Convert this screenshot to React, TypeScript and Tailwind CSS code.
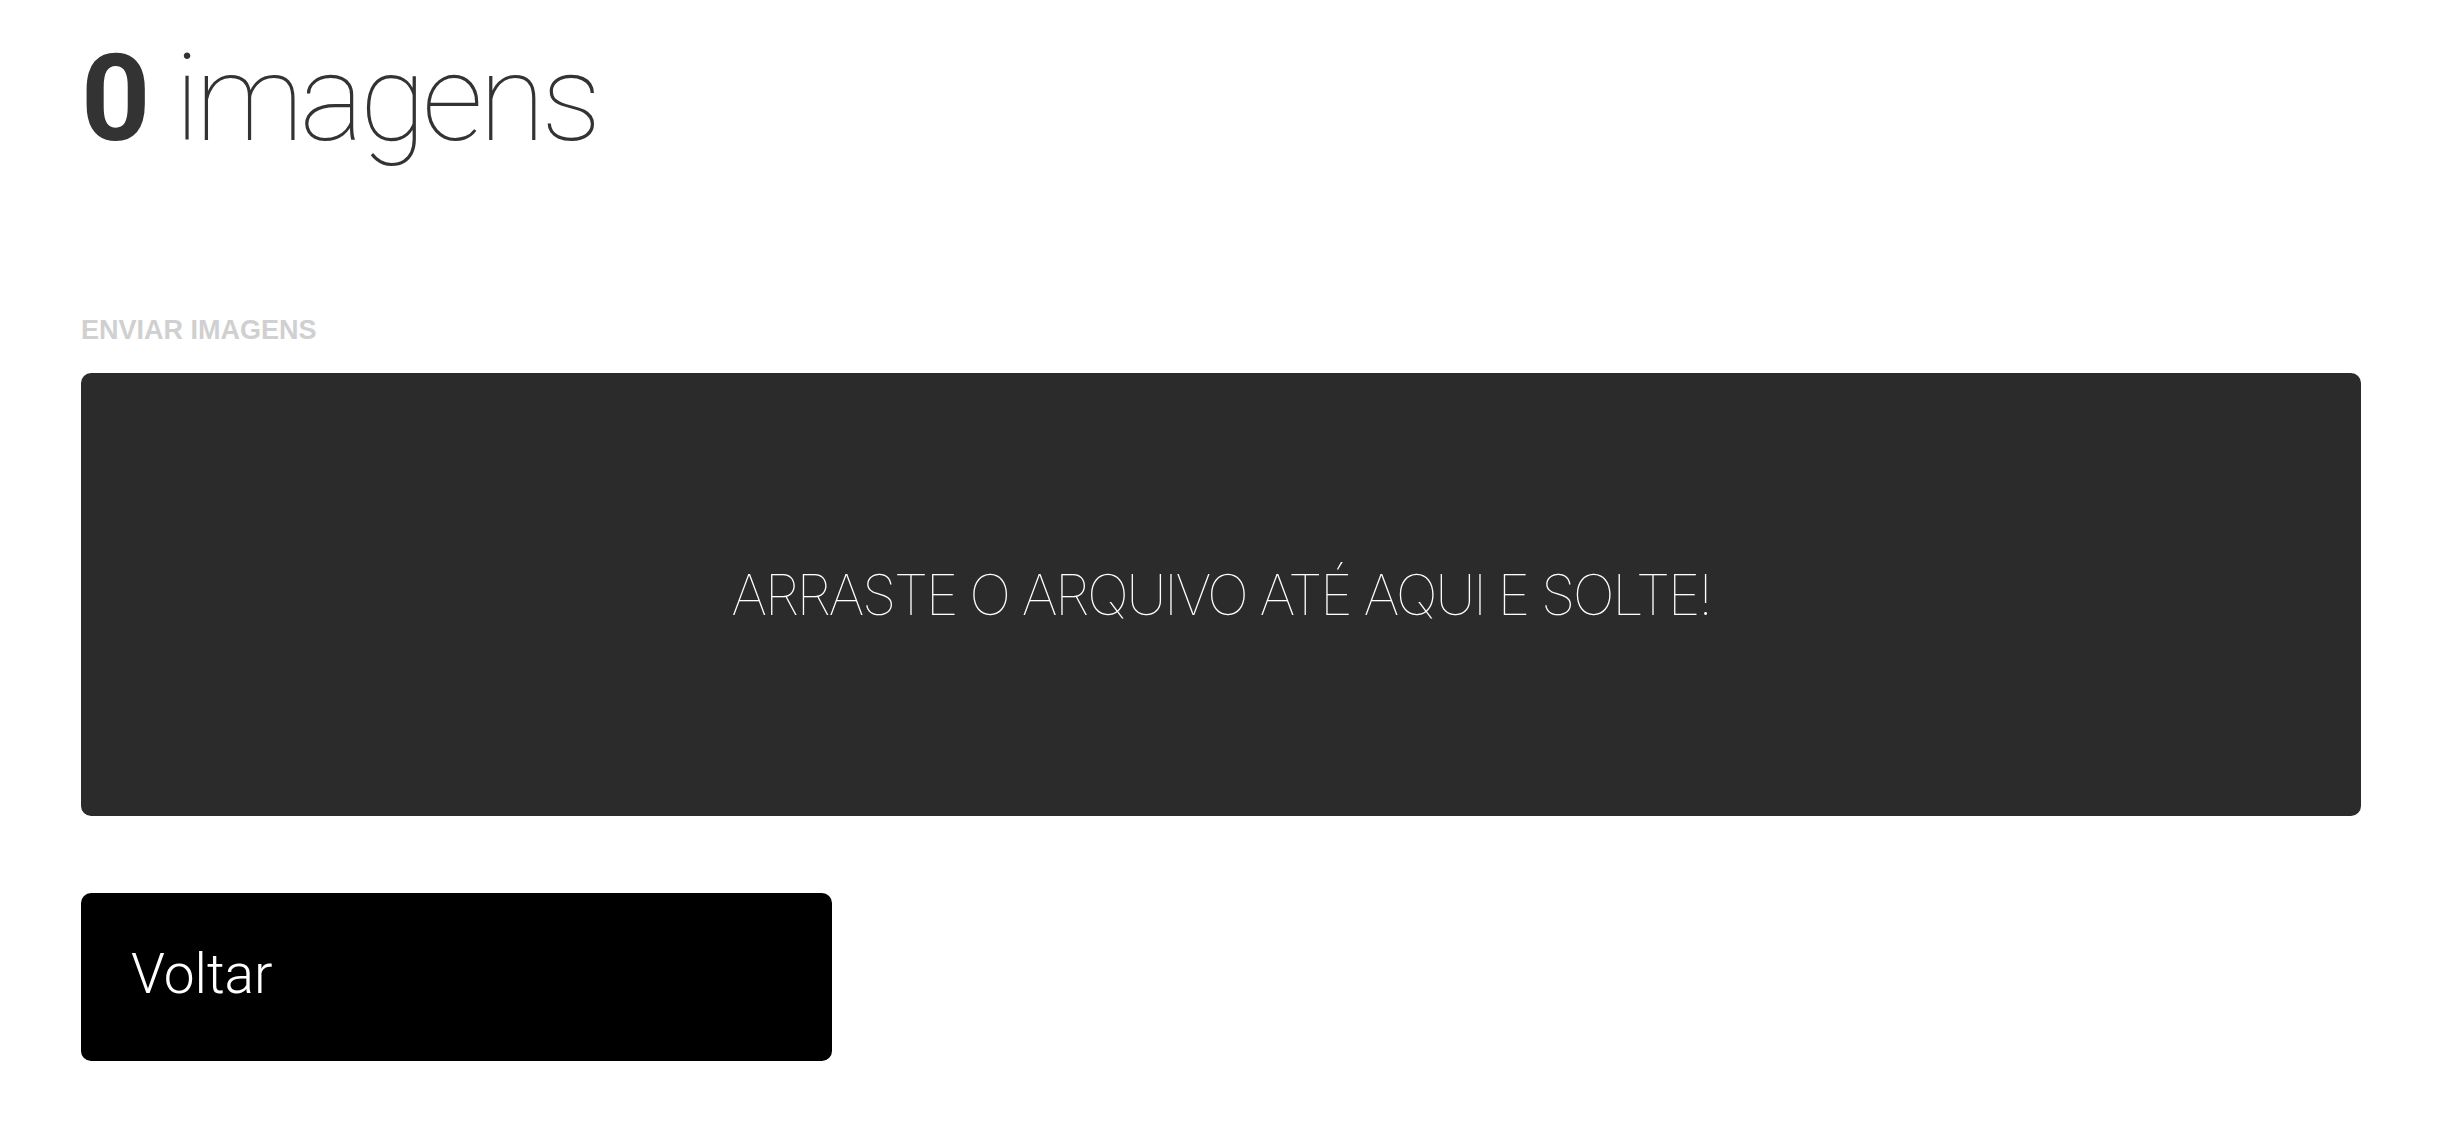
import React from 'react';

export default function App() {
  return (
    <div className="min-h-screen bg-white pl-[81px] pr-[77px] pt-[39px] text-[#333]">
      <h1 className="font-['Roboto',sans-serif] text-[121px] leading-none tracking-[-3px] whitespace-nowrap">
        <span className="font-bold">0</span> <span className="font-thin tracking-[-4px]">imagens</span>
      </h1>

      <div className="mt-[154px] font-['Liberation_Sans',Arial,sans-serif] text-[27px] leading-[32px] font-bold text-[#d0d0d0]">
        ENVIAR IMAGENS
      </div>

      <div className="mt-[27px] h-[443px] rounded-[10px] bg-[#2b2b2b] flex items-center justify-center cursor-pointer">
        <p className="font-['Inter',sans-serif] font-thin text-[56px] leading-none text-white tracking-[-2.5px] whitespace-nowrap">
          ARRASTE O ARQUIVO ATÉ AQUI E SOLTE!
        </p>
      </div>

      <button className="mt-[77px] w-[751px] h-[168px] rounded-[10px] bg-black flex items-center pl-[50px] pb-[6px] text-left">
        <span className="font-['Roboto',sans-serif] font-light text-[55px] leading-none text-white">Voltar</span>
      </button>
    </div>
  );
}
